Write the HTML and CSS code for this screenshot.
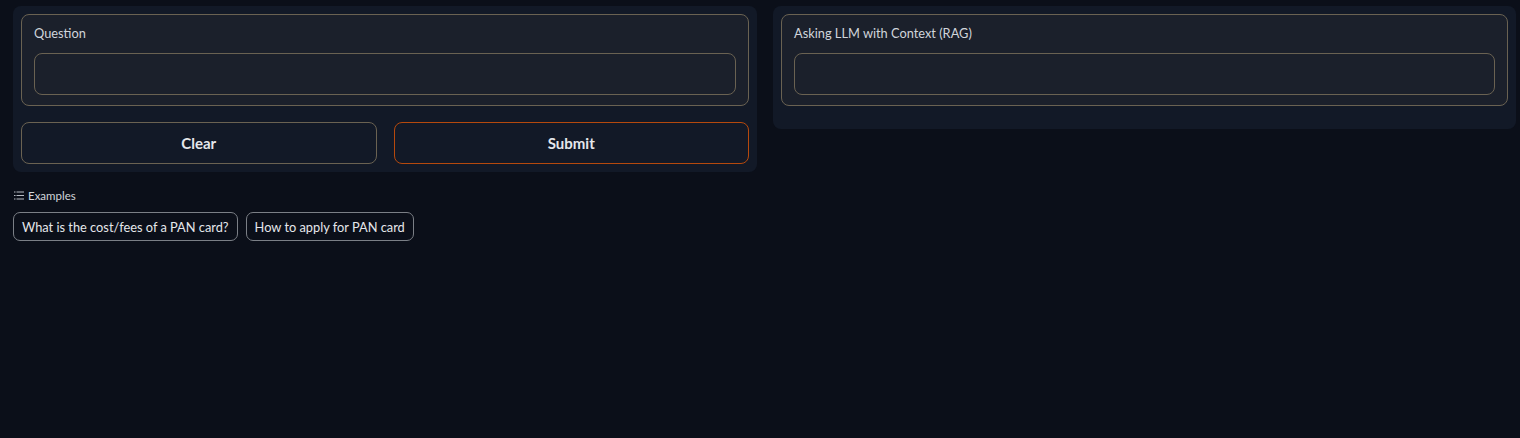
FILE: index.html
```html
<!DOCTYPE html>
<html>
<head>
<meta charset="utf-8">
<link rel="stylesheet" href="styles.css">
</head>
<body>
<div class="app">
  <div class="row">
    <div class="panel left">
      <div class="block">
        <label class="label">Question</label>
        <div class="input"></div>
      </div>
      <div class="buttons">
        <button class="btn">Clear</button>
        <button class="btn primary">Submit</button>
      </div>
    </div>
    <div class="panel right">
      <div class="block">
        <label class="label">Asking LLM with Context (RAG)</label>
        <div class="input"></div>
      </div>
    </div>
  </div>
  <div class="examples">
    <div class="ex-head">
      <svg class="ex-icon" width="10" height="9" viewBox="0 0 10 9"><g fill="#b8bcc4"><rect x="0" y="0.5" width="1.5" height="1"/><rect x="2.5" y="0.5" width="7.5" height="1"/><rect x="0" y="4" width="1.5" height="1"/><rect x="2.5" y="4" width="7.5" height="1"/><rect x="0" y="7.5" width="1.5" height="1"/><rect x="2.5" y="7.5" width="7.5" height="1"/></g></svg>
      <span>Examples</span>
    </div>
    <div class="ex-list">
      <button class="ex">What is the cost/fees of a PAN card?</button>
      <button class="ex">How to apply for PAN card</button>
    </div>
  </div>
</div>
</body>
</html>
```
FILE: styles.css
```css
* { box-sizing: border-box; }
html, body { margin: 0; padding: 0; background: #0b0f19; }
body { font-family: "Source Sans Pro", Lato, "Liberation Sans", sans-serif; color: #e5e7eb; }
.app { padding: 6px 4px 0 13px; }
.row { display: flex; gap: 16px; align-items: flex-start; }
.panel { background: #121927; border-radius: 8px; padding: 8px; flex: 1; }
.left { width: 744px; flex: 0 0 744px; }
.right { flex: 1; padding-bottom: 23px; }
.block { background: #1b202b; border: 1px solid #6a6252; border-radius: 8px; padding: 10px 12px 10px 12px; }
.label { display: block; font-size: 12.8px; line-height: 16px; color: #d1d5db; margin-bottom: 12px; }
.input { height: 42px; border: 1px solid #6a6252; border-radius: 8px; background: #1b202b; }
.buttons { display: flex; gap: 17px; margin-top: 16px; }
.btn { flex: 1; height: 42px; background: #121927; border: 1px solid #6a6252; border-radius: 8px; color: #e5e7eb; font-family: inherit; font-weight: 700; font-size: 15px; }
.btn.primary { border-color: #b5490d; }
.examples { margin-top: 16px; }
.ex-head { display: flex; align-items: center; gap: 4px; font-size: 11.5px; color: #d1d5db; margin-left: 1px; height: 14px; }
.ex-list { display: flex; gap: 8px; margin-top: 10px; }
.ex { height: 29px; padding: 0 8px; background: #0b0f19; border: 1px solid #7b7f86; border-radius: 7px; color: #e5e7eb; font-family: inherit; font-size: 12.8px; }
```
